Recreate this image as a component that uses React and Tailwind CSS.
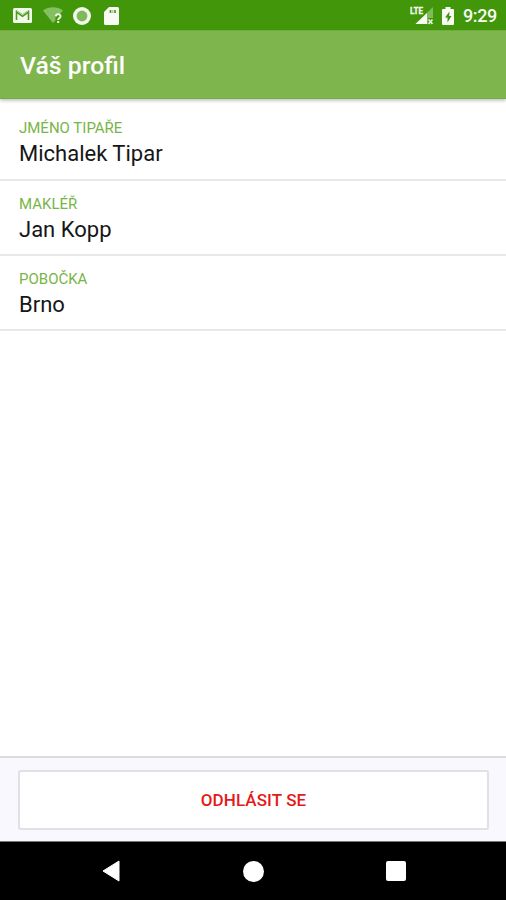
const PROFILE = [
  { label: 'Jméno tipaře', value: 'Michalek Tipar' },
  { label: 'Makléř', value: 'Jan Kopp' },
  { label: 'Pobočka', value: 'Brno' },
];

function MailIcon() {
  return (
    <svg width="19" height="15" viewBox="0 0 19 15">
      <rect width="19" height="15" rx="1.5" fill="#f2f9ed" />
      <path d="M3.5 12V4L9.5 8.3l6-4.3V12" fill="none" stroke="#4c9a1c" strokeWidth="1.6" />
      <path d="M3 2.2l6.5 4.3L16 2.2" fill="none" stroke="#8fc070" strokeWidth="1" />
    </svg>
  );
}

function WifiIcon() {
  return (
    <svg width="20" height="17" viewBox="0 0 20 17">
      <path d="M0 3.6C5.8-.8 14.2-.8 20 3.6L16.6 7.4h-4.2v6L10 16z" fill="#86bf61" />
      <path d="M12.8 9.4c.2-3 5-2.7 4.7.1-.2 1.6-2.3 1.5-2.3 3.5M15.2 14v2" fill="none" stroke="#eef7e8" strokeWidth="2" />
    </svg>
  );
}

function RecordIcon() {
  return (
    <svg width="18" height="18" viewBox="0 0 18 18">
      <circle cx="9" cy="9" r="9" fill="#f2f9ed" />
      <circle cx="9" cy="9" r="5.4" fill="#80b85c" />
    </svg>
  );
}

function SdCardIcon() {
  return (
    <svg width="15" height="18" viewBox="0 0 15 18">
      <path d="M5 0h8.5Q15 0 15 1.5v15q0 1.5-1.5 1.5h-12Q0 18 0 16.5V5z" fill="#f7fbf4" />
      <path d="M6.5 3v3M11 3v3" stroke="#4c9a1c" strokeWidth="1.7" />
      <path d="M8.8 3v3" stroke="#8fc070" strokeWidth="1" />
    </svg>
  );
}

function SignalIcon() {
  return (
    <svg width="23" height="19" viewBox="0 0 23 19" fontFamily="Roboto, sans-serif">
      <path d="M23 1v11h-5v6H5.5z" fill="#80bb59" />
      <path d="M17 7v11H5.5z" fill="#f7fbf4" />
      <path d="M18.5 13.5l4 4.5M22.5 13.5l-4 4.5" stroke="#e5f2dc" strokeWidth="1.7" />
      <text
        x="0"
        y="8"
        fontSize="9.5"
        fontWeight="700"
        textLength="13"
        lengthAdjust="spacingAndGlyphs"
        fill="#f7fbf4"
        stroke="#f7fbf4"
        strokeWidth="0.3"
      >
        LTE
      </text>
    </svg>
  );
}

function BatteryIcon() {
  return (
    <svg width="12" height="18" viewBox="0 0 12 18">
      <path d="M3.5 0h5v2H11q1 0 1 1v14q0 1-1 1H1q-1 0-1-1V3q0-1 1-1h2.5z" fill="#f7fbf4" />
      <path d="M7.5 4.5L3 10.5h2.5v5L9.5 9H7.2z" fill="#3f9310" />
    </svg>
  );
}

function StatusBar() {
  return (
    <div className="flex h-[30px] shrink-0 items-center justify-between bg-[#419709] pl-[13px] pr-[9px] pt-px">
      <div className="flex items-center">
        <MailIcon />
        <div className="ml-[11px]"><WifiIcon /></div>
        <div className="ml-[10px]"><RecordIcon /></div>
        <div className="ml-[13px]"><SdCardIcon /></div>
      </div>
      <div className="flex items-center">
        <SignalIcon />
        <div className="ml-[9px]"><BatteryIcon /></div>
        <span className="ml-[9px] w-[34px] whitespace-nowrap text-[18px] font-medium leading-none tracking-[-0.4px] text-[#f7fbf4]">
          9:29
        </span>
      </div>
    </div>
  );
}

function ProfileRow({ label, value }) {
  return (
    <div className="h-[75.3px] border-b-2 border-[#e8e8e8] pl-[19px] pt-[13px]">
      <div className="text-[15px] uppercase leading-[20px] text-[#78b547]">{label}</div>
      <div className="pt-[1px] text-[22px] leading-[30px] text-[#161616]">{value}</div>
    </div>
  );
}

export default function App() {
  return (
    <div className="flex h-[900px] w-[506px] flex-col overflow-hidden bg-white font-['Roboto',sans-serif]">
      <StatusBar />

      {/* Title bar */}
      <header className="z-10 flex h-[69px] shrink-0 items-center border-y border-[#72ae3f] bg-[#7fb54d] pl-[20px] pt-[4px] shadow-[0_2px_3px_rgba(0,0,0,0.22)]">
        <h1 className="text-[24.8px] font-medium leading-none text-white">Váš profil</h1>
      </header>

      <main className="flex-1 pt-[6.4px]">
        {PROFILE.map(({ label, value }) => (
          <ProfileRow key={label} label={label} value={value} />
        ))}
      </main>

      {/* Logout */}
      <footer className="h-[85px] shrink-0 border-t-2 border-[#dcdcdf] bg-[#f9f8fe] px-[18px] pt-[12px]">
        <button className="h-[60px] w-[471px] rounded-[3px] border-2 border-[#e1e1e3] bg-white pt-[2px] text-[17px] font-medium uppercase tracking-[0.1px] text-[#e3191a]">
          Odhlásit se
        </button>
      </footer>

      {/* System navigation */}
      <nav className="flex h-[59px] shrink-0 items-center border-t border-[#777777] bg-black pl-[102px]">
        <svg width="18" height="22" viewBox="0 0 18 22">
          <path d="M17 1v20L1 11z" fill="#fff" stroke="#fff" strokeLinejoin="round" />
        </svg>
        <div className="ml-[123px] size-[21px] rounded-full bg-white" />
        <div className="ml-[122px] size-[20px] rounded-[2px] bg-white" />
      </nav>
    </div>
  );
}
